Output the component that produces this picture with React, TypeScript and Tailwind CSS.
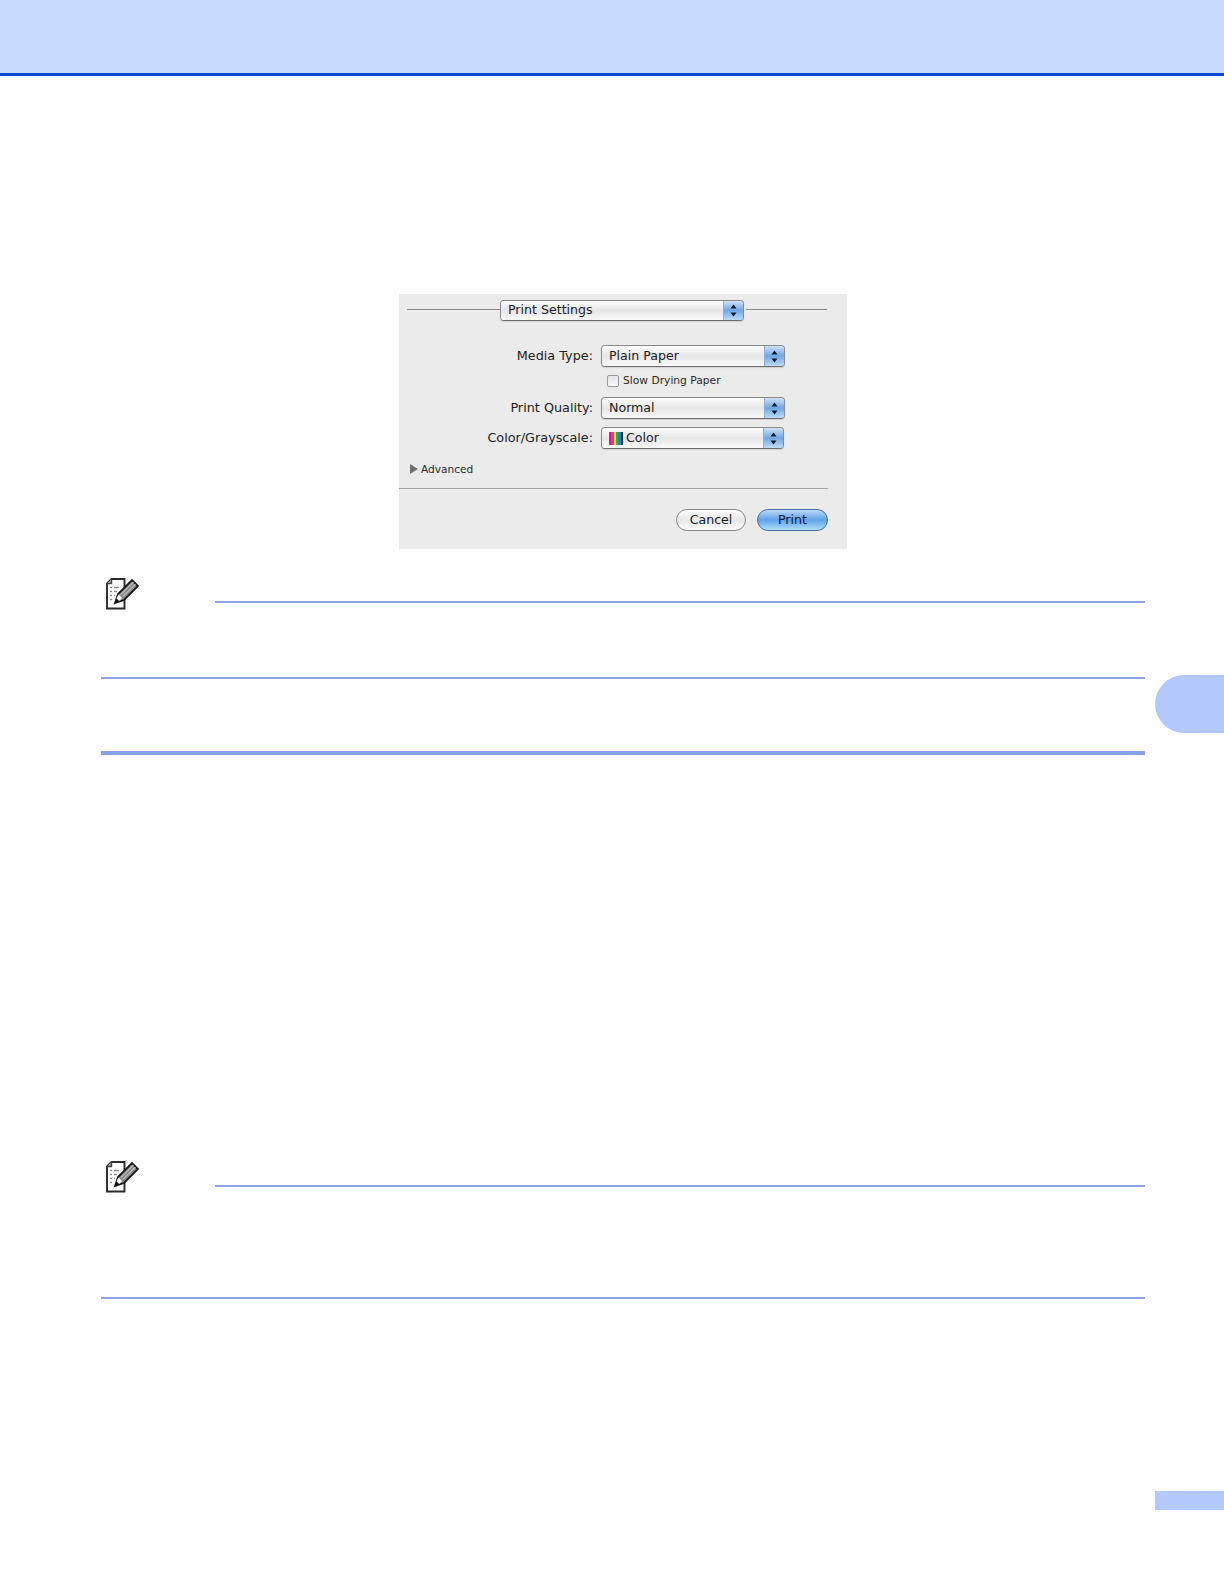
const font = "font-['DejaVu_Sans',sans-serif]";

function NoteIcon() {
  return (
    <svg width="33" height="32" viewBox="0 0 33 32" className="shrink-0">
      <path d="M5.5 1H18.5V30.5H1V5.5Z" fill="#fff" stroke="#2b2b2b" strokeWidth="1.9" />
      <path d="M5.5 1V5.5H1" fill="#aaa" stroke="#444" strokeWidth="1.4" />
      <path
        d="M4 9.5H6M8 9.5H13M4 13.5H6M8 13.5H11M4 17.5H6M8 17.5H9M4 21.5H6"
        stroke="#888"
        strokeWidth="1.7"
      />
      <path d="M9 25L12 16L26 2L32 8L18 22Z" fill="#8a8a8a" stroke="#1a1a1a" strokeWidth="1.8" />
      <path d="M15 16.5L27.5 4M17 18.5L29.5 6" stroke="#d8d8d8" strokeWidth="1" />
      <path d="M10.5 20.5L12.5 16.5L16 20L13 23Z" fill="#fff" />
      <path d="M9 25L10.5 20.5L13.5 23.5Z" fill="#111" />
    </svg>
  );
}

function Arrows() {
  return (
    <svg width="7" height="13" viewBox="0 0 7 13">
      <path d="M3.5 0.5L6.5 4.5H0.5Z" fill="#141c26" />
      <path d="M3.5 12.5L6.5 8.5H0.5Z" fill="#141c26" />
    </svg>
  );
}

function Select({ size, children }: { size: string; children: React.ReactNode }) {
  return (
    <div
      className={`flex ${size} shrink-0 overflow-hidden rounded-[4px] border border-[#8a8a8a] border-b-[#6f6f6f] shadow-[0_1px_1px_rgba(0,0,0,0.12)]`}
    >
      <div className="flex flex-1 items-center bg-linear-to-b from-[#fdfdfd] via-[#e6e6e6] to-[#fafafa] pl-[7px] text-[12.6px] leading-none text-[#1c1c1c]">
        {children}
      </div>
      <div className="flex w-[20px] items-center justify-center border-l border-[#8fb0d8] bg-linear-to-b from-[#cfe2f8] via-[#6ea6e6] to-[#bcdcfa] pr-[1px]">
        <Arrows />
      </div>
    </div>
  );
}

function Swatch() {
  return (
    <div className="mr-[3px] flex h-[13px] w-[14px]">
      <div className="flex-1 bg-[#e0148c]" />
      <div className="flex-1 bg-[#e8358a]" />
      <div className="flex-1 bg-[#f2dc1e]" />
      <div className="flex-1 bg-[#2fae4a]" />
      <div className="flex-1 bg-[#1b86b8]" />
      <div className="flex-1 bg-[#14235f]" />
    </div>
  );
}

function Row({ label, className, children }: { label: string; className: string; children: React.ReactNode }) {
  return (
    <div className={`flex items-center ${className}`}>
      <div className="w-[194px] text-right text-[12.8px] leading-none text-[#222]">{label}</div>
      <div className="ml-[8px]">{children}</div>
    </div>
  );
}

function PrintDialog() {
  return (
    <div className={`ml-[399px] mt-[218px] h-[255px] w-[448px] bg-[#ebebeb] pt-[6px] ${font}`}>
      <div className="flex items-center pl-[8px]">
        <div className="mb-[2px] h-px w-[93px] bg-[#8c8c8c]" />
        <Select size="h-[21px] w-[244px]">Print Settings</Select>
        <div className="mb-[2px] ml-[2px] h-px w-[81px] bg-[#8c8c8c]" />
      </div>

      <Row label="Media Type:" className="mt-[24px]">
        <Select size="h-[22px] w-[184px]">Plain Paper</Select>
      </Row>
      <div className="ml-[208px] mt-[7px] flex h-[13px] items-center">
        <div className="h-[12px] w-[12px] rounded-[2px] border border-[#9a9a9a] bg-linear-to-b from-[#e4e4e4] to-[#fbfbfb]" />
        <span className="ml-[4px] mt-[2px] text-[10.7px] leading-none text-[#2a2a2a]">Slow Drying Paper</span>
      </div>
      <Row label="Print Quality:" className="mt-[10px]">
        <Select size="h-[22px] w-[184px]">Normal</Select>
      </Row>
      <Row label="Color/Grayscale:" className="mt-[8px]">
        <Select size="h-[22px] w-[183px]">
          <Swatch />
          Color
        </Select>
      </Row>

      <div className="ml-[11px] mt-[14px] flex h-[13px] items-center">
        <svg width="8" height="10" viewBox="0 0 8 10" className="mb-[2px]">
          <path d="M0 0L8 5L0 10Z" fill="#6e6e6e" />
        </svg>
        <span className="ml-[3px] text-[10.6px] leading-none text-[#2a2a2a]">Advanced</span>
      </div>
      <div className="mt-[12px] h-px w-[429px] bg-[#a0a0a0]" />

      <div className="ml-[277px] mt-[20px] flex gap-[11px]">
        <div className="flex h-[22px] w-[70px] items-center justify-center rounded-full border border-[#8a8a8a] bg-linear-to-b from-[#fdfdfd] via-[#e8e8e8] to-[#fbfbfb] text-[12.6px] leading-none text-[#1c1c1c]">
          Cancel
        </div>
        <div className="flex h-[22px] w-[71px] items-center justify-center rounded-full border border-[#4d6f9e] bg-linear-to-b from-[#bcd8f6] via-[#5fa0ea] to-[#aee0fc] text-[12.6px] leading-none text-[#14202e]">
          Print
        </div>
      </div>
    </div>
  );
}

export default function App() {
  return (
    <div className="flex h-[1584px] w-[1224px] flex-col overflow-hidden bg-white">
      <div className="h-[76px] shrink-0 border-b-[3px] border-[#1047d0] bg-[#c9daff]" />

      <PrintDialog />

      <div className="mt-[29px] flex pl-[101px]">
        <div className="w-[1044px]">
          <div className="flex h-[32px] pl-[5px]">
            <NoteIcon />
            <div className="ml-[76px] mt-[23px] h-[2px] flex-1 bg-[#8ba6e3]" />
          </div>
          <div className="mt-[67px] h-[2px] bg-[#8ba6e3]" />
          <div className="mt-[72px] h-[4px] bg-[#86a2ea]" />

          <div className="mt-[406px] flex h-[32px] pl-[5px]">
            <NoteIcon />
            <div className="ml-[76px] mt-[24px] h-[2px] flex-1 bg-[#8ba6e3]" />
          </div>
          <div className="mt-[104px] h-[2px] bg-[#8ba6e3]" />
        </div>
        <div className="ml-[10px] mt-[97px] h-[58px] w-[69px] rounded-l-[29px] bg-[#b3c8fc]" />
      </div>

      <div className="mt-[192px] h-[19px] w-[69px] self-end bg-[#b3c8fc]" />
    </div>
  );
}
